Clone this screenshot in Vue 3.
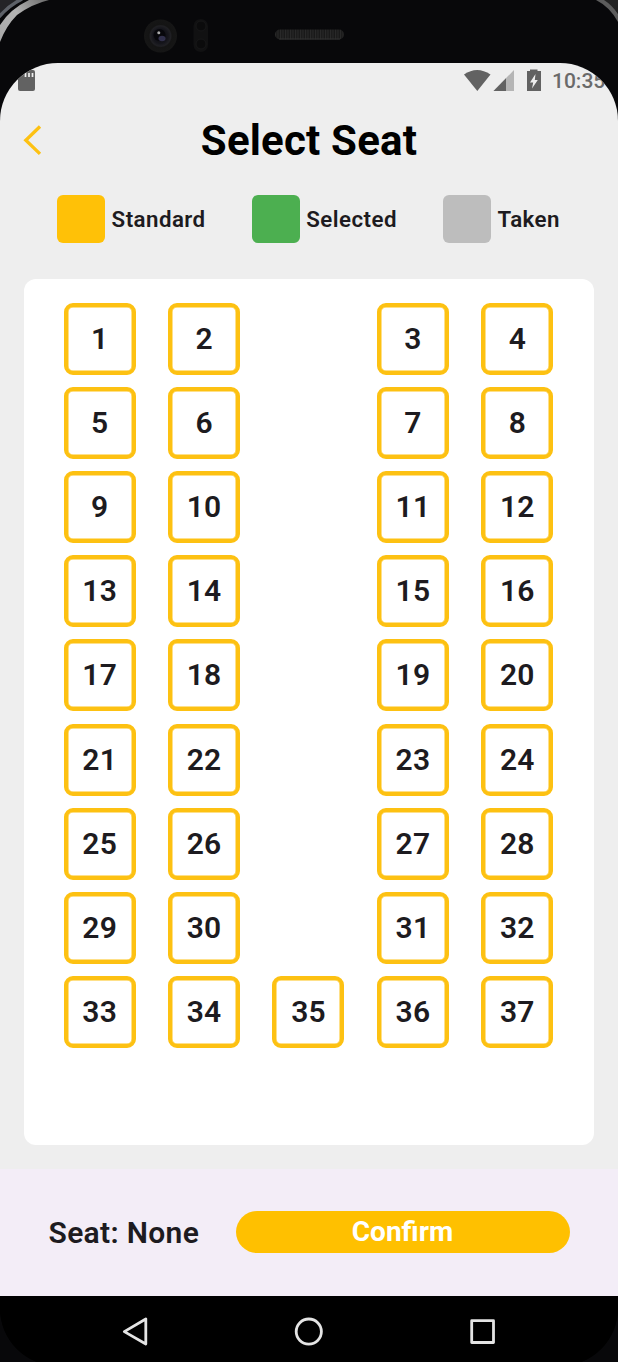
<script setup>
const legend = [
  { label: 'Standard', kind: 'standard' },
  { label: 'Selected', kind: 'selected' },
  { label: 'Taken', kind: 'taken' },
]
const seats = []
for (let row = 0; row < 8; row++) {
  const n = row * 4
  seats.push(n + 1, n + 2, null, n + 3, n + 4)
}
seats.push(33, 34, 35, 36, 37)
</script>

<template>
  <div class="device">
    <div class="bezel">
      <svg width="618" height="63" viewBox="0 0 618 63">
        <defs>
          <linearGradient id="rimLeft" gradientUnits="userSpaceOnUse" x1="0" y1="40" x2="46" y2="0">
            <stop offset="0" stop-color="#a9a9a9" />
            <stop offset="0.5" stop-color="#b4b4b4" />
            <stop offset="1" stop-color="#6e6e6e" />
          </linearGradient>
          <pattern id="mesh" width="2.5" height="8" patternUnits="userSpaceOnUse">
            <rect width="2.5" height="8" fill="#191919" />
            <rect width="1" height="8" fill="#2a2a2a" />
          </pattern>
          <radialGradient id="lens">
            <stop offset="0" stop-color="#08080c" />
            <stop offset="0.45" stop-color="#15151b" />
            <stop offset="0.62" stop-color="#202024" />
            <stop offset="0.7" stop-color="#141414" />
            <stop offset="1" stop-color="#161616" />
          </radialGradient>
        </defs>
        <path d="M0 0H22Q9 6 0 17Z" fill="#242427" />
        <path d="M-1 17Q8 6 22 -1" fill="none" stroke="#5d6168" stroke-width="3.500" />
        <path d="M0 25Q10 9 29 0H49Q32 4 17 15Q6 26 0 42Z" fill="url(#rimLeft)" />
        <path d="M603 0H618V14Q612 5 603 0Z" fill="#222" />
        <path d="M596 0Q610 7 618 22V14Q612 5 604 0Z" fill="#5c5c5c" />
        <circle cx="160.500" cy="36" r="16.500" fill="url(#lens)" />
        <circle cx="159.500" cy="35" r="6" fill="#07070b" />
        <ellipse cx="162" cy="38.500" rx="3.500" ry="2.800" fill="#414065" opacity=".7" />
        <circle cx="158.800" cy="32.800" r="1.500" fill="#aaa" />
        <rect x="193.500" y="19" width="14.500" height="33" rx="7" fill="#111112" />
        <circle cx="201" cy="26" r="5" fill="#0b0b0c" stroke="#171718" />
        <circle cx="201" cy="44" r="5" fill="#0b0b0c" stroke="#171718" />
        <rect x="275" y="29.500" width="69" height="10" rx="5" fill="url(#mesh)" />
        <path d="M279 39H340" stroke="#333" />
      </svg>
    </div>

    <div class="screen">
      <div class="status">
        <svg class="sd" width="17" height="21" viewBox="0 0 17 21">
          <path d="M6 0H15Q17 0 17 2V19Q17 21 15 21H2Q0 21 0 19V7Z" fill="#626262" />
          <path d="M7.500 3V7M11 3V7M14.500 3V7" stroke="#eee" stroke-width="1.700" />
        </svg>
        <svg class="signals" width="80" height="24" viewBox="464 69 80 24">
          <path d="M464 74.500Q477 65.500 490.500 74.500L477.300 91Z" fill="#626262" />
          <path d="M514 70V91H493.500Z" fill="#b5b5b5" />
          <path d="M506 78.200V91H493.500Z" fill="#626262" />
          <path d="M527 71H530V69.500H537.500V71H541V91H527Z" fill="#626262" />
          <path d="M535.500 74L530 82.500H533.200L532 88.500L537.800 80H534.800Z" fill="#eee" />
        </svg>
        <span class="time">10:35</span>
      </div>

      <header class="header">
        <svg class="back" width="20" height="34" viewBox="0 0 20 34">
          <path d="M18 2.500L3.800 16.200L18 29.900" fill="none" stroke="#fdc112" stroke-width="3.300" />
        </svg>
        <h1>Select Seat</h1>
      </header>

      <div class="legend">
        <div v-for="item in legend" :key="item.kind" class="legend-item">
          <i class="swatch" :class="item.kind"></i>
          <span>{{ item.label }}</span>
        </div>
      </div>

      <main class="panel">
        <div v-for="(seat, i) in seats" :key="i" class="cell">
          <button v-if="seat" class="seat">{{ seat }}</button>
        </div>
      </main>

      <footer class="footer">
        <span class="choice">Seat: None</span>
        <button class="confirm">Confirm</button>
      </footer>

      <nav class="nav">
        <svg width="618" height="66" viewBox="0 1296 618 66">
          <g fill="none" stroke="#e4e4e4" stroke-width="2.800" stroke-linejoin="round">
            <path d="M145.800 1319V1344L124.300 1331.600Z" />
            <circle cx="308.800" cy="1331.600" r="12.600" />
            <rect x="471.700" y="1320.700" width="21.800" height="21.800" />
          </g>
        </svg>
      </nav>
    </div>
  </div>
</template>

<style>
body {
  background: #09090a;
}
</style>

<style scoped>
.device {
  width: 618px;
  height: 1362px;
  overflow: hidden;
  background: #08080a;
  font-family: Roboto, "Liberation Sans", sans-serif;
  color: #1d1b20;
}
.bezel {
  height: 63px;
}
.bezel svg {
  display: block;
}
.screen {
  height: 1303px;
  display: flex;
  flex-direction: column;
  overflow: hidden;
  background: linear-gradient(#eee 1200px, #000 1200px);
  border-radius: 58px;
}
.status {
  box-sizing: border-box;
  height: 36px;
  flex: none;
  display: flex;
  align-items: flex-start;
  padding: 6px 12px 0 18px;
}
.sd {
  flex: none;
  margin-top: 1px;
}
.signals {
  flex: none;
  margin-left: 429px;
}
.time {
  margin-left: 8px;
  font-size: 21px;
  line-height: 25px;
  font-weight: 500;
  color: #6a6a6a;
  white-space: nowrap;
}
.header {
  height: 84px;
  flex: none;
  display: grid;
  grid-template-columns: 48px 1fr 48px;
  align-items: center;
}
.back {
  margin-left: 22px;
}
h1 {
  margin: 0;
  text-align: center;
  font-size: 42px;
  font-weight: 700;
  line-height: 50px;
  letter-spacing: 0.2px;
  color: #000;
  white-space: nowrap;
}
.legend {
  box-sizing: border-box;
  flex: none;
  height: 96px;
  display: flex;
  justify-content: space-between;
  padding: 12px 58px 0 57px;
}
.legend-item {
  display: flex;
  height: 48px;
  align-items: center;
  gap: 6.6px;
  font-size: 22.3px;
  font-weight: 600;
  letter-spacing: 0.45px;
}
.swatch {
  width: 48px;
  height: 48px;
  border-radius: 6px;
}
.standard {
  background: #ffc107;
}
.selected {
  background: #4caf50;
}
.taken {
  background: #bdbdbd;
}
.panel {
  flex: none;
  box-sizing: border-box;
  height: 866px;
  margin: 0 24.5px 0 23.5px;
  padding: 24px 24px;
  border-radius: 12px;
  background: #fff;
  display: grid;
  grid-template-columns: repeat(5, 1fr);
  grid-auto-rows: 72px;
  row-gap: 12.12px;
  align-content: start;
}
.cell {
  display: flex;
  justify-content: center;
}
.seat {
  box-sizing: border-box;
  width: 72px;
  height: 72px;
  padding: 0;
  border: 4px solid #fdc112;
  border-radius: 9px;
  box-shadow: inset 0 0 0 0.5px #fdc112;
  background: #fff;
  color: #1d1b20;
  font: 600 30px/1 Roboto, "Liberation Sans", sans-serif;
  letter-spacing: 0.2px;
}
.footer {
  box-sizing: border-box;
  margin-top: 24px;
  height: 127px;
  flex: none;
  display: flex;
  align-items: center;
  padding: 0 48.5px 1px;
  background: #f3edf7;
}
.choice {
  width: 187px;
  flex: none;
  font-size: 30px;
  font-weight: 600;
  letter-spacing: 0.33px;
  white-space: nowrap;
}
.confirm {
  flex: 1;
  height: 42px;
  padding: 0;
  border: 0;
  border-radius: 21px;
  background: #ffc000;
  color: #fff;
  font: 700 28px/42px Roboto, "Liberation Sans", sans-serif;
}
.nav {
  flex: 1;
  background: #000;
}
.nav svg {
  display: block;
}
</style>
